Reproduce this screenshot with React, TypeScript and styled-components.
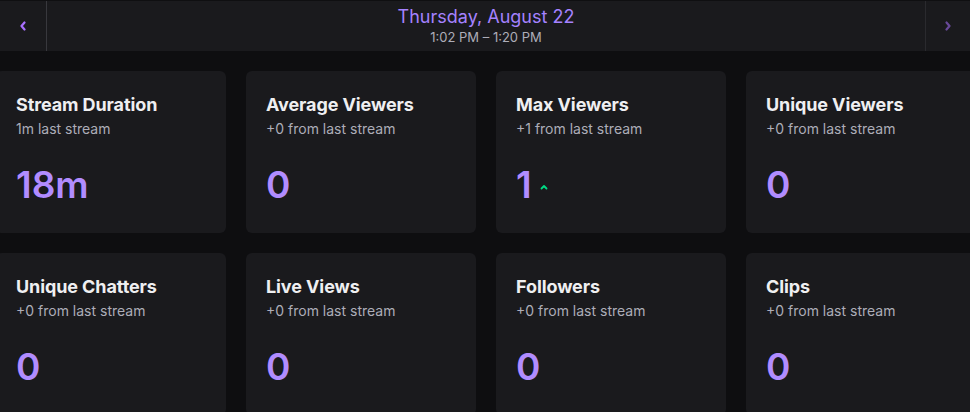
import React from "react";
import styled, { createGlobalStyle } from "styled-components";

const GlobalStyle = createGlobalStyle`
  html, body {
    margin: 0;
    padding: 0;
    background: #0e0e10;
    overflow: hidden;
  }
  body {
    font-family: Inter, "Noto Sans", sans-serif;
    color: #efeff1;
  }
`;

const Page = styled.div`
  width: 970px;
  height: 412px;
  overflow: hidden;
  background: #0e0e10;
  display: flex;
  flex-direction: column;
  gap: 20px;
`;

const Header = styled.header`
  display: flex;
  flex-shrink: 0;
  align-items: stretch;
  height: 50px;
  background: #1a1a1d;
  border-top: 1px solid #0f0f11;
`;

const NavButton = styled.button<{ $side: "left" | "right"; $dim?: boolean }>`
  flex: 0 0 auto;
  display: flex;
  align-items: center;
  justify-content: center;
  background: transparent;
  border: none;
  padding: 0;
  ${(p) => (p.$side === "left" ? "border-right: 1px solid #38383d;" : "border-left: 1px solid #38383d;")}
  ${(p) => (p.$side === "left" ? "width: 47px;" : "width: 45px;")}
  color: #a970ff;
  opacity: ${(p) => (p.$dim ? 0.55 : 1)};
  cursor: pointer;
`;

const DateBlock = styled.div`
  flex: 1;
  display: flex;
  flex-direction: column;
  align-items: center;
  justify-content: center;
  padding-bottom: 1px;
`;

const DateTitle = styled.div`
  font-size: 18px;
  line-height: 23px;
  color: #a582ff;
  font-weight: 400;
`;

const TimeRange = styled.div`
  font-size: 13px;
  line-height: 19px;
  color: #adadb8;
`;

const Grid = styled.div`
  flex-shrink: 0;
  display: grid;
  grid-template-columns: repeat(4, 230px);
  grid-auto-rows: 162px;
  gap: 20px;
  margin-left: -4px;
`;

const Card = styled.div`
  background: #1a1a1d;
  border-radius: 6px;
  padding: 20px 20px;
  display: flex;
  flex-direction: column;
`;

const Title = styled.div`
  font-size: 18px;
  line-height: 28px;
  font-weight: 700;
  color: #efeff1;
  letter-spacing: -0.1px;
`;

const Sub = styled.div`
  font-size: 14px;
  line-height: 20px;
  color: #adadb8;
`;

const ValueRow = styled.div`
  display: flex;
  align-items: center;
  gap: 8px;
  margin-top: 24px;
`;

const Value = styled.div`
  font-size: 37px;
  line-height: 44px;
  font-weight: 600;
  color: #b18cff;
`;

const Trend = styled.span`
  display: flex;
  color: #00db84;
  margin-top: 4px;
`;

const ChevronLeft = () => (
  <svg width="8" height="10" viewBox="0 0 8 10" fill="none">
    <path d="M5.5 1.5 L2.5 5 L5.5 8.5" stroke="currentColor" strokeWidth="2.2" strokeLinecap="round" strokeLinejoin="round" />
  </svg>
);

const ChevronRight = () => (
  <svg width="8" height="10" viewBox="0 0 8 10" fill="none">
    <path d="M2.5 1.5 L5.5 5 L2.5 8.5" stroke="currentColor" strokeWidth="2.2" strokeLinecap="round" strokeLinejoin="round" />
  </svg>
);

const UpTick = () => (
  <svg width="8" height="6" viewBox="0 0 8 6" fill="none">
    <path d="M1.5 4.5 L4 2 L6.5 4.5" stroke="currentColor" strokeWidth="1.8" strokeLinecap="round" strokeLinejoin="round" />
  </svg>
);

type Stat = { title: string; sub: string; value: string; up?: boolean };

const stats: Stat[] = [
  { title: "Stream Duration", sub: "1m last stream", value: "18m" },
  { title: "Average Viewers", sub: "+0 from last stream", value: "0" },
  { title: "Max Viewers", sub: "+1 from last stream", value: "1", up: true },
  { title: "Unique Viewers", sub: "+0 from last stream", value: "0" },
  { title: "Unique Chatters", sub: "+0 from last stream", value: "0" },
  { title: "Live Views", sub: "+0 from last stream", value: "0" },
  { title: "Followers", sub: "+0 from last stream", value: "0" },
  { title: "Clips", sub: "+0 from last stream", value: "0" },
];

export default function App() {
  return (
    <>
      <GlobalStyle />
      <Page>
        <Header>
          <NavButton $side="left" aria-label="Previous">
            <ChevronLeft />
          </NavButton>
          <DateBlock>
            <DateTitle>Thursday, August 22</DateTitle>
            <TimeRange>1:02 PM – 1:20 PM</TimeRange>
          </DateBlock>
          <NavButton $side="right" $dim aria-label="Next">
            <ChevronRight />
          </NavButton>
        </Header>
        <Grid>
          {stats.map((s) => (
            <Card key={s.title}>
              <Title>{s.title}</Title>
              <Sub>{s.sub}</Sub>
              <ValueRow>
                <Value>{s.value}</Value>
                {s.up && (
                  <Trend>
                    <UpTick />
                  </Trend>
                )}
              </ValueRow>
            </Card>
          ))}
        </Grid>
      </Page>
    </>
  );
}
